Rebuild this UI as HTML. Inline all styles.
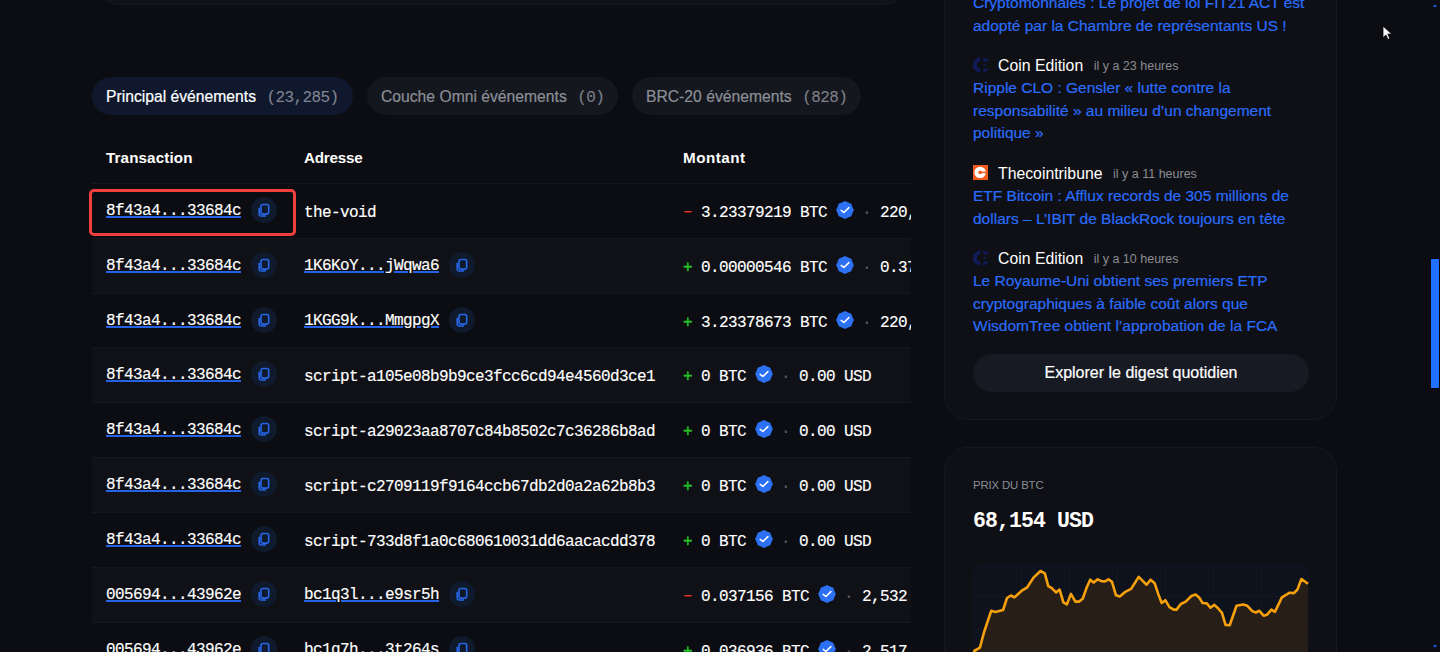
<!DOCTYPE html>
<html><head><meta charset="utf-8">
<style>
*{box-sizing:border-box;margin:0;padding:0}
html,body{width:1440px;height:652px;overflow:hidden;background:#0c0d12;font-family:"Liberation Sans",sans-serif;color:#fff}
.abs{position:absolute}
.mono{font-family:"Liberation Mono",monospace}
#topcard{left:92px;top:-100px;width:819px;height:105px;border-radius:28px;background:#111217;border:1px solid #161824}
.tab{top:77px;height:38px;border-radius:19px;background:#15171e;font-size:15.7px;line-height:39px;white-space:nowrap;color:#8b8e96;padding-left:14px;-webkit-text-stroke:0.2px currentColor}
.tab .cnt{font-family:"Liberation Mono",monospace;font-size:16px;letter-spacing:-0.6px;margin-left:10.5px;color:#7d8089;-webkit-text-stroke:0.1px currentColor}
#tab1{left:92px;width:261px;background:#10182e;color:#fff}
#tab1 .cnt{color:#80848e}
#tab2{left:367px;width:251px}
#tab3{left:632px;width:229px}
#table{left:92px;top:115px;width:819px;height:540px;overflow:hidden}
.th{position:absolute;top:5px;height:68px;font-weight:700;font-size:15.2px;line-height:76px;color:#fff}
.row{position:absolute;left:0;width:819px;height:55px;border-top:1px solid #15161f}
.row.alt{background:#101116}
.cell{position:absolute;top:2px;height:54px;line-height:54px;white-space:nowrap;font-family:"Liberation Mono",monospace;font-size:16px;letter-spacing:-0.6px;color:#fff;-webkit-text-stroke:0.15px currentColor}
.lnk{text-decoration:underline;text-decoration-color:#2463e6;text-decoration-thickness:1.5px;text-underline-offset:1px}
.cell.cp{top:-0.5px}
.cell.pl{top:1.5px}
.copy{display:inline-block;width:26px;height:26px;border-radius:13px;background:#0f1a2d;vertical-align:middle;position:relative;top:0px;margin-left:10px;-webkit-text-stroke:0}
.copy svg{position:absolute;left:7px;top:6px}
.sign-m{color:#ec3426;-webkit-text-stroke:0.3px currentColor;position:relative;top:-1.5px}
.sign-p{color:#25c425;-webkit-text-stroke:0.4px currentColor}
.badge{display:inline-block;width:18px;height:18px;vertical-align:middle;position:relative;top:-2.3px;left:-0.8px;margin:0 -1.5px 0 0.5px}
.dot{color:#555861}
.card{left:944px;width:393px;border-radius:24px;background:#0f1015;border:1px solid #161822}
.news{position:absolute;left:28px;width:340px}
.src{height:22px;line-height:22px;font-size:15.8px;white-space:nowrap;position:relative;padding-left:25px}
.src .t{font-size:12.5px;color:#8b8d94;margin-left:10.5px;position:relative;top:-1px}
.hl{color:#2a6cfb;font-size:15.5px;line-height:22.5px;-webkit-text-stroke:0.2px #2a6cfb}
</style></head><body>
<div id="topcard" class="abs"></div>

<div id="tab1" class="abs tab">Principal événements<span class="cnt">(23,285)</span></div>
<div id="tab2" class="abs tab">Couche Omni événements<span class="cnt">(0)</span></div>
<div id="tab3" class="abs tab">BRC-20 événements<span class="cnt">(828)</span></div>

<div id="table" class="abs">
<div class="th" style="left:14px;letter-spacing:0.12px">Transaction</div><div class="th" style="left:212px;letter-spacing:-0.2px">Adresse</div><div class="th" style="left:591px;letter-spacing:0.5px">Montant</div>
<div class="row" style="top:68.00px;height:55px"><div class="cell cp" style="left:14px"><span class="lnk">8f43a4...33684c</span><span class="copy"><svg width="12" height="14" viewBox="0 0 12 14"><rect x="3" y="1.5" width="7.7" height="9.6" rx="2" fill="none" stroke="#2766e6" stroke-width="1.6"/><path d="M1.2,4.8 L1.2,11 Q1.2,13 3.2,13 L8,13" fill="none" stroke="#2766e6" stroke-width="1.6"/></svg></span></div><div class="cell pl" style="left:212px">the-void</div><div class="cell" style="left:591px"><span class="sign-m">–</span> 3.23379219 BTC <svg class="badge" viewBox="0 0 18 18"><path d="M9.00,0.10 L12.10,1.52 L15.29,2.71 L16.48,5.90 L17.90,9.00 L16.48,12.10 L15.29,15.29 L12.10,16.48 L9.00,17.90 L5.90,16.48 L2.71,15.29 L1.52,12.10 L0.10,9.00 L1.52,5.90 L2.71,2.71 L5.90,1.52 Z" fill="#2c70f4"/><path d="M5.2,9.4 L7.9,11.5 L12.9,6.6" fill="none" stroke="#fff" stroke-width="1.5" stroke-linecap="round" stroke-linejoin="round"/></svg> <span class="dot">·</span> 220,</div></div>
<div class="row alt" style="top:123.00px;height:55px"><div class="cell cp" style="left:14px"><span class="lnk">8f43a4...33684c</span><span class="copy"><svg width="12" height="14" viewBox="0 0 12 14"><rect x="3" y="1.5" width="7.7" height="9.6" rx="2" fill="none" stroke="#2766e6" stroke-width="1.6"/><path d="M1.2,4.8 L1.2,11 Q1.2,13 3.2,13 L8,13" fill="none" stroke="#2766e6" stroke-width="1.6"/></svg></span></div><div class="cell cp" style="left:212px"><span class="lnk">1K6KoY...jWqwa6</span><span class="copy"><svg width="12" height="14" viewBox="0 0 12 14"><rect x="3" y="1.5" width="7.7" height="9.6" rx="2" fill="none" stroke="#2766e6" stroke-width="1.6"/><path d="M1.2,4.8 L1.2,11 Q1.2,13 3.2,13 L8,13" fill="none" stroke="#2766e6" stroke-width="1.6"/></svg></span></div><div class="cell" style="left:591px"><span class="sign-p">+</span> 0.00000546 BTC <svg class="badge" viewBox="0 0 18 18"><path d="M9.00,0.10 L12.10,1.52 L15.29,2.71 L16.48,5.90 L17.90,9.00 L16.48,12.10 L15.29,15.29 L12.10,16.48 L9.00,17.90 L5.90,16.48 L2.71,15.29 L1.52,12.10 L0.10,9.00 L1.52,5.90 L2.71,2.71 L5.90,1.52 Z" fill="#2c70f4"/><path d="M5.2,9.4 L7.9,11.5 L12.9,6.6" fill="none" stroke="#fff" stroke-width="1.5" stroke-linecap="round" stroke-linejoin="round"/></svg> <span class="dot">·</span> 0.37</div></div>
<div class="row" style="top:178.00px;height:54px"><div class="cell cp" style="left:14px"><span class="lnk">8f43a4...33684c</span><span class="copy"><svg width="12" height="14" viewBox="0 0 12 14"><rect x="3" y="1.5" width="7.7" height="9.6" rx="2" fill="none" stroke="#2766e6" stroke-width="1.6"/><path d="M1.2,4.8 L1.2,11 Q1.2,13 3.2,13 L8,13" fill="none" stroke="#2766e6" stroke-width="1.6"/></svg></span></div><div class="cell cp" style="left:212px"><span class="lnk">1KGG9k...MmgpgX</span><span class="copy"><svg width="12" height="14" viewBox="0 0 12 14"><rect x="3" y="1.5" width="7.7" height="9.6" rx="2" fill="none" stroke="#2766e6" stroke-width="1.6"/><path d="M1.2,4.8 L1.2,11 Q1.2,13 3.2,13 L8,13" fill="none" stroke="#2766e6" stroke-width="1.6"/></svg></span></div><div class="cell" style="left:591px"><span class="sign-p">+</span> 3.23378673 BTC <svg class="badge" viewBox="0 0 18 18"><path d="M9.00,0.10 L12.10,1.52 L15.29,2.71 L16.48,5.90 L17.90,9.00 L16.48,12.10 L15.29,15.29 L12.10,16.48 L9.00,17.90 L5.90,16.48 L2.71,15.29 L1.52,12.10 L0.10,9.00 L1.52,5.90 L2.71,2.71 L5.90,1.52 Z" fill="#2c70f4"/><path d="M5.2,9.4 L7.9,11.5 L12.9,6.6" fill="none" stroke="#fff" stroke-width="1.5" stroke-linecap="round" stroke-linejoin="round"/></svg> <span class="dot">·</span> 220,</div></div>
<div class="row alt" style="top:232.00px;height:55px"><div class="cell cp" style="left:14px"><span class="lnk">8f43a4...33684c</span><span class="copy"><svg width="12" height="14" viewBox="0 0 12 14"><rect x="3" y="1.5" width="7.7" height="9.6" rx="2" fill="none" stroke="#2766e6" stroke-width="1.6"/><path d="M1.2,4.8 L1.2,11 Q1.2,13 3.2,13 L8,13" fill="none" stroke="#2766e6" stroke-width="1.6"/></svg></span></div><div class="cell pl" style="left:212px">script-a105e08b9b9ce3fcc6cd94e4560d3ce1</div><div class="cell" style="left:591px"><span class="sign-p">+</span> 0 BTC <svg class="badge" viewBox="0 0 18 18"><path d="M9.00,0.10 L12.10,1.52 L15.29,2.71 L16.48,5.90 L17.90,9.00 L16.48,12.10 L15.29,15.29 L12.10,16.48 L9.00,17.90 L5.90,16.48 L2.71,15.29 L1.52,12.10 L0.10,9.00 L1.52,5.90 L2.71,2.71 L5.90,1.52 Z" fill="#2c70f4"/><path d="M5.2,9.4 L7.9,11.5 L12.9,6.6" fill="none" stroke="#fff" stroke-width="1.5" stroke-linecap="round" stroke-linejoin="round"/></svg> <span class="dot">·</span> 0.00 USD</div></div>
<div class="row" style="top:287.00px;height:55px"><div class="cell cp" style="left:14px"><span class="lnk">8f43a4...33684c</span><span class="copy"><svg width="12" height="14" viewBox="0 0 12 14"><rect x="3" y="1.5" width="7.7" height="9.6" rx="2" fill="none" stroke="#2766e6" stroke-width="1.6"/><path d="M1.2,4.8 L1.2,11 Q1.2,13 3.2,13 L8,13" fill="none" stroke="#2766e6" stroke-width="1.6"/></svg></span></div><div class="cell pl" style="left:212px">script-a29023aa8707c84b8502c7c36286b8ad</div><div class="cell" style="left:591px"><span class="sign-p">+</span> 0 BTC <svg class="badge" viewBox="0 0 18 18"><path d="M9.00,0.10 L12.10,1.52 L15.29,2.71 L16.48,5.90 L17.90,9.00 L16.48,12.10 L15.29,15.29 L12.10,16.48 L9.00,17.90 L5.90,16.48 L2.71,15.29 L1.52,12.10 L0.10,9.00 L1.52,5.90 L2.71,2.71 L5.90,1.52 Z" fill="#2c70f4"/><path d="M5.2,9.4 L7.9,11.5 L12.9,6.6" fill="none" stroke="#fff" stroke-width="1.5" stroke-linecap="round" stroke-linejoin="round"/></svg> <span class="dot">·</span> 0.00 USD</div></div>
<div class="row alt" style="top:342.00px;height:55px"><div class="cell cp" style="left:14px"><span class="lnk">8f43a4...33684c</span><span class="copy"><svg width="12" height="14" viewBox="0 0 12 14"><rect x="3" y="1.5" width="7.7" height="9.6" rx="2" fill="none" stroke="#2766e6" stroke-width="1.6"/><path d="M1.2,4.8 L1.2,11 Q1.2,13 3.2,13 L8,13" fill="none" stroke="#2766e6" stroke-width="1.6"/></svg></span></div><div class="cell pl" style="left:212px">script-c2709119f9164ccb67db2d0a2a62b8b3</div><div class="cell" style="left:591px"><span class="sign-p">+</span> 0 BTC <svg class="badge" viewBox="0 0 18 18"><path d="M9.00,0.10 L12.10,1.52 L15.29,2.71 L16.48,5.90 L17.90,9.00 L16.48,12.10 L15.29,15.29 L12.10,16.48 L9.00,17.90 L5.90,16.48 L2.71,15.29 L1.52,12.10 L0.10,9.00 L1.52,5.90 L2.71,2.71 L5.90,1.52 Z" fill="#2c70f4"/><path d="M5.2,9.4 L7.9,11.5 L12.9,6.6" fill="none" stroke="#fff" stroke-width="1.5" stroke-linecap="round" stroke-linejoin="round"/></svg> <span class="dot">·</span> 0.00 USD</div></div>
<div class="row" style="top:397.00px;height:55px"><div class="cell cp" style="left:14px"><span class="lnk">8f43a4...33684c</span><span class="copy"><svg width="12" height="14" viewBox="0 0 12 14"><rect x="3" y="1.5" width="7.7" height="9.6" rx="2" fill="none" stroke="#2766e6" stroke-width="1.6"/><path d="M1.2,4.8 L1.2,11 Q1.2,13 3.2,13 L8,13" fill="none" stroke="#2766e6" stroke-width="1.6"/></svg></span></div><div class="cell pl" style="left:212px">script-733d8f1a0c680610031dd6aacacdd378</div><div class="cell" style="left:591px"><span class="sign-p">+</span> 0 BTC <svg class="badge" viewBox="0 0 18 18"><path d="M9.00,0.10 L12.10,1.52 L15.29,2.71 L16.48,5.90 L17.90,9.00 L16.48,12.10 L15.29,15.29 L12.10,16.48 L9.00,17.90 L5.90,16.48 L2.71,15.29 L1.52,12.10 L0.10,9.00 L1.52,5.90 L2.71,2.71 L5.90,1.52 Z" fill="#2c70f4"/><path d="M5.2,9.4 L7.9,11.5 L12.9,6.6" fill="none" stroke="#fff" stroke-width="1.5" stroke-linecap="round" stroke-linejoin="round"/></svg> <span class="dot">·</span> 0.00 USD</div></div>
<div class="row alt" style="top:452.00px;height:55px"><div class="cell cp" style="left:14px"><span class="lnk">005694...43962e</span><span class="copy"><svg width="12" height="14" viewBox="0 0 12 14"><rect x="3" y="1.5" width="7.7" height="9.6" rx="2" fill="none" stroke="#2766e6" stroke-width="1.6"/><path d="M1.2,4.8 L1.2,11 Q1.2,13 3.2,13 L8,13" fill="none" stroke="#2766e6" stroke-width="1.6"/></svg></span></div><div class="cell cp" style="left:212px"><span class="lnk">bc1q3l...e9sr5h</span><span class="copy"><svg width="12" height="14" viewBox="0 0 12 14"><rect x="3" y="1.5" width="7.7" height="9.6" rx="2" fill="none" stroke="#2766e6" stroke-width="1.6"/><path d="M1.2,4.8 L1.2,11 Q1.2,13 3.2,13 L8,13" fill="none" stroke="#2766e6" stroke-width="1.6"/></svg></span></div><div class="cell" style="left:591px"><span class="sign-m">–</span> 0.037156 BTC <svg class="badge" viewBox="0 0 18 18"><path d="M9.00,0.10 L12.10,1.52 L15.29,2.71 L16.48,5.90 L17.90,9.00 L16.48,12.10 L15.29,15.29 L12.10,16.48 L9.00,17.90 L5.90,16.48 L2.71,15.29 L1.52,12.10 L0.10,9.00 L1.52,5.90 L2.71,2.71 L5.90,1.52 Z" fill="#2c70f4"/><path d="M5.2,9.4 L7.9,11.5 L12.9,6.6" fill="none" stroke="#fff" stroke-width="1.5" stroke-linecap="round" stroke-linejoin="round"/></svg> <span class="dot">·</span> 2,532</div></div>
<div class="row" style="top:507.00px;height:55px"><div class="cell cp" style="left:14px"><span class="lnk">005694...43962e</span><span class="copy"><svg width="12" height="14" viewBox="0 0 12 14"><rect x="3" y="1.5" width="7.7" height="9.6" rx="2" fill="none" stroke="#2766e6" stroke-width="1.6"/><path d="M1.2,4.8 L1.2,11 Q1.2,13 3.2,13 L8,13" fill="none" stroke="#2766e6" stroke-width="1.6"/></svg></span></div><div class="cell cp" style="left:212px"><span class="lnk">bc1q7h...3t264s</span><span class="copy"><svg width="12" height="14" viewBox="0 0 12 14"><rect x="3" y="1.5" width="7.7" height="9.6" rx="2" fill="none" stroke="#2766e6" stroke-width="1.6"/><path d="M1.2,4.8 L1.2,11 Q1.2,13 3.2,13 L8,13" fill="none" stroke="#2766e6" stroke-width="1.6"/></svg></span></div><div class="cell" style="left:591px"><span class="sign-p">+</span> 0.036936 BTC <svg class="badge" viewBox="0 0 18 18"><path d="M9.00,0.10 L12.10,1.52 L15.29,2.71 L16.48,5.90 L17.90,9.00 L16.48,12.10 L15.29,15.29 L12.10,16.48 L9.00,17.90 L5.90,16.48 L2.71,15.29 L1.52,12.10 L0.10,9.00 L1.52,5.90 L2.71,2.71 L5.90,1.52 Z" fill="#2c70f4"/><path d="M5.2,9.4 L7.9,11.5 L12.9,6.6" fill="none" stroke="#fff" stroke-width="1.5" stroke-linecap="round" stroke-linejoin="round"/></svg> <span class="dot">·</span> 2,517</div></div>

</div>

<div class="abs card" style="top:-200px;height:619.5px">
 <div class="news" style="top:191px"><div class="hl">Cryptomonnaies : Le projet de loi FIT21 ACT est adopté par la Chambre de représentants US !</div></div>
 <div class="news" style="top:254px"><div class="src"><svg class="abs" style="left:0;top:1.8px" width="16" height="16" viewBox="0 0 16 16"><path d="M7.4,0.4 A7.6,7.6 0 0 0 7.4,15.6 L7.4,11.4 A3.4,3.4 0 0 1 7.4,4.6 Z" fill="#111b58"/><path d="M10.2,0.6 Q13.6,1.2 15.2,3.2 L15.2,4.6 L12.2,4.6 Q11.4,3.9 10.2,3.6 Z M10.2,15.4 Q13.6,14.8 15.2,12.8 L15.2,11.4 L12.2,11.4 Q11.4,12.1 10.2,12.4 Z M9.6,8 L12.6,6.4 L12.6,9.6 Z" fill="#111b58"/></svg><span>Coin Edition</span><span class="t">il y a 23 heures</span></div><div class="hl">Ripple CLO : Gensler « lutte contre la responsabilité » au milieu d’un changement politique »</div></div>
 <div class="news" style="top:362px"><div class="src"><svg class="abs" style="left:0;top:1.6px" width="15" height="15" viewBox="0 0 15 15"><rect width="15" height="15" fill="#f25a1c"/><circle cx="7.1" cy="7.4" r="5.7" fill="#fff"/><circle cx="7.1" cy="7.4" r="1.8" fill="#f25a1c"/><rect x="7.1" y="6.6" width="6" height="1.6" fill="#f25a1c"/></svg><span>Thecointribune</span><span class="t">il y a 11 heures</span></div><div class="hl">ETF Bitcoin : Afflux records de 305 millions de dollars – L’IBIT de BlackRock toujours en tête</div></div>
 <div class="news" style="top:447px"><div class="src"><svg class="abs" style="left:0;top:1.8px" width="16" height="16" viewBox="0 0 16 16"><path d="M7.4,0.4 A7.6,7.6 0 0 0 7.4,15.6 L7.4,11.4 A3.4,3.4 0 0 1 7.4,4.6 Z" fill="#111b58"/><path d="M10.2,0.6 Q13.6,1.2 15.2,3.2 L15.2,4.6 L12.2,4.6 Q11.4,3.9 10.2,3.6 Z M10.2,15.4 Q13.6,14.8 15.2,12.8 L15.2,11.4 L12.2,11.4 Q11.4,12.1 10.2,12.4 Z M9.6,8 L12.6,6.4 L12.6,9.6 Z" fill="#111b58"/></svg><span>Coin Edition</span><span class="t">il y a 10 heures</span></div><div class="hl">Le Royaume-Uni obtient ses premiers ETP cryptographiques à faible coût alors que WisdomTree obtient l’approbation de la FCA</div></div>
 <div class="abs" style="left:28px;top:553px;width:336px;height:38px;border-radius:19px;background:#171a23;text-align:center;line-height:38px;font-size:16px;color:#fff;-webkit-text-stroke:0.2px #fff">Explorer le digest quotidien</div>
</div>

<div class="abs card" style="top:447px;height:300px">
 <div class="abs" style="left:28px;top:28.5px;font-size:11.4px;letter-spacing:-0.15px;color:#8a8d95;line-height:16px">PRIX DU BTC</div>
 <div class="abs mono" style="left:28px;top:59px;font-size:21.5px;letter-spacing:-0.9px;font-weight:700;line-height:28px;color:#fff">68,154 USD</div>
 <div class="abs" style="left:28px;top:115px;width:336px;height:200px;border-radius:12px;background:#0e121c;overflow:hidden">
  <svg width="336" height="120" style="position:absolute;left:0;top:0">
   <g stroke="#15171e" stroke-width="1">
    <line x1="48.5" y1="0" x2="48.5" y2="120"/><line x1="96.5" y1="0" x2="96.5" y2="120"/><line x1="144.5" y1="0" x2="144.5" y2="120"/><line x1="192.5" y1="0" x2="192.5" y2="120"/><line x1="240.5" y1="0" x2="240.5" y2="120"/><line x1="288.5" y1="0" x2="288.5" y2="120"/>
    <line x1="0" y1="33.5" x2="336" y2="33.5"/><line x1="0" y1="65.5" x2="336" y2="65.5"/>
   </g>
   <path d="M0,92 L1.2,88.0 L6.9,84.7 L11.1,69.0 L18.2,47.8 L22.4,48.9 L30.1,47.0 L34.0,35.0 L37.9,32.5 L41.4,34.4 L49.2,27.3 L54.1,24.5 L60.5,14.6 L67.5,8.0 L71.8,10.4 L75.3,23.1 L78.8,25.2 L83.0,29.4 L86.6,26.6 L90.4,39.3 L93.9,41.4 L97.9,30.9 L102.4,38.6 L105.9,38.6 L109.7,35.8 L113.7,24.5 L117.2,16.7 L120.7,19.6 L124.7,16.3 L128.5,18.2 L132.0,18.4 L135.5,16.3 L139.0,18.9 L143.0,32.3 L146.8,33.4 L151.8,29.2 L158.1,25.9 L161.2,21.0 L165.7,13.9 L169.7,17.9 L173.6,21.7 L177.5,16.7 L181.7,20.3 L185.2,30.9 L188.7,40.0 L192.3,37.2 L196.5,44.2 L200.7,46.6 L203.5,46.6 L207.8,41.0 L212.7,38.6 L218.4,33.0 L222.6,31.6 L226.1,34.4 L229.6,40.0 L233.9,40.4 L237.4,44.7 L241.3,41.9 L244.8,45.0 L249.0,49.9 L252.5,61.9 L256.7,62.2 L263.5,42.8 L270.1,41.4 L274.4,42.8 L279.3,48.1 L282.8,49.5 L286.4,47.8 L290.6,52.7 L294.1,51.7 L298.4,46.6 L301.9,48.9 L308.9,34.4 L316.7,29.7 L320.9,30.1 L324.4,26.6 L328.4,16.0 L335.0,20.7 L335,120 L0,120 Z" fill="#2a2018" fill-opacity="0.95"/>
   <path d="M-2,92 L1.2,88.0 L6.9,84.7 L11.1,69.0 L18.2,47.8 L22.4,48.9 L30.1,47.0 L34.0,35.0 L37.9,32.5 L41.4,34.4 L49.2,27.3 L54.1,24.5 L60.5,14.6 L67.5,8.0 L71.8,10.4 L75.3,23.1 L78.8,25.2 L83.0,29.4 L86.6,26.6 L90.4,39.3 L93.9,41.4 L97.9,30.9 L102.4,38.6 L105.9,38.6 L109.7,35.8 L113.7,24.5 L117.2,16.7 L120.7,19.6 L124.7,16.3 L128.5,18.2 L132.0,18.4 L135.5,16.3 L139.0,18.9 L143.0,32.3 L146.8,33.4 L151.8,29.2 L158.1,25.9 L161.2,21.0 L165.7,13.9 L169.7,17.9 L173.6,21.7 L177.5,16.7 L181.7,20.3 L185.2,30.9 L188.7,40.0 L192.3,37.2 L196.5,44.2 L200.7,46.6 L203.5,46.6 L207.8,41.0 L212.7,38.6 L218.4,33.0 L222.6,31.6 L226.1,34.4 L229.6,40.0 L233.9,40.4 L237.4,44.7 L241.3,41.9 L244.8,45.0 L249.0,49.9 L252.5,61.9 L256.7,62.2 L263.5,42.8 L270.1,41.4 L274.4,42.8 L279.3,48.1 L282.8,49.5 L286.4,47.8 L290.6,52.7 L294.1,51.7 L298.4,46.6 L301.9,48.9 L308.9,34.4 L316.7,29.7 L320.9,30.1 L324.4,26.6 L328.4,16.0 L335.0,20.7" fill="none" stroke="#f7a00e" stroke-width="2.6" stroke-linejoin="round"/>
  </svg>
 </div>
</div>

<svg class="abs" style="left:1428px;top:0" width="12" height="652">
 <path d="M4.3,7 L7,4 L9.7,7 Z" fill="#1f70ff" stroke="#050508" stroke-width="0.6"/>
 <rect x="2.5" y="258" width="9.5" height="131" fill="#050508"/><rect x="3" y="259" width="8" height="129" fill="#1f70ff"/>
 <path d="M4.3,645 L9.7,645 L7,648 Z" fill="#1f70ff" stroke="#050508" stroke-width="0.6"/>
</svg>
<svg class="abs" style="left:1377.5px;top:21px" width="20" height="22">
 <path d="M5,5 L5,16.8 L7.9,13.9 L9.9,18.4 L11.8,17.6 L9.9,13.1 L13.7,13 Z" fill="#fff" stroke="#000" stroke-width="0.8"/>
</svg>
<div class="abs" style="left:88.6px;top:188.6px;width:207.2px;height:47.4px;border:3px solid #f03f3d;border-radius:5px"></div>
</body></html>
